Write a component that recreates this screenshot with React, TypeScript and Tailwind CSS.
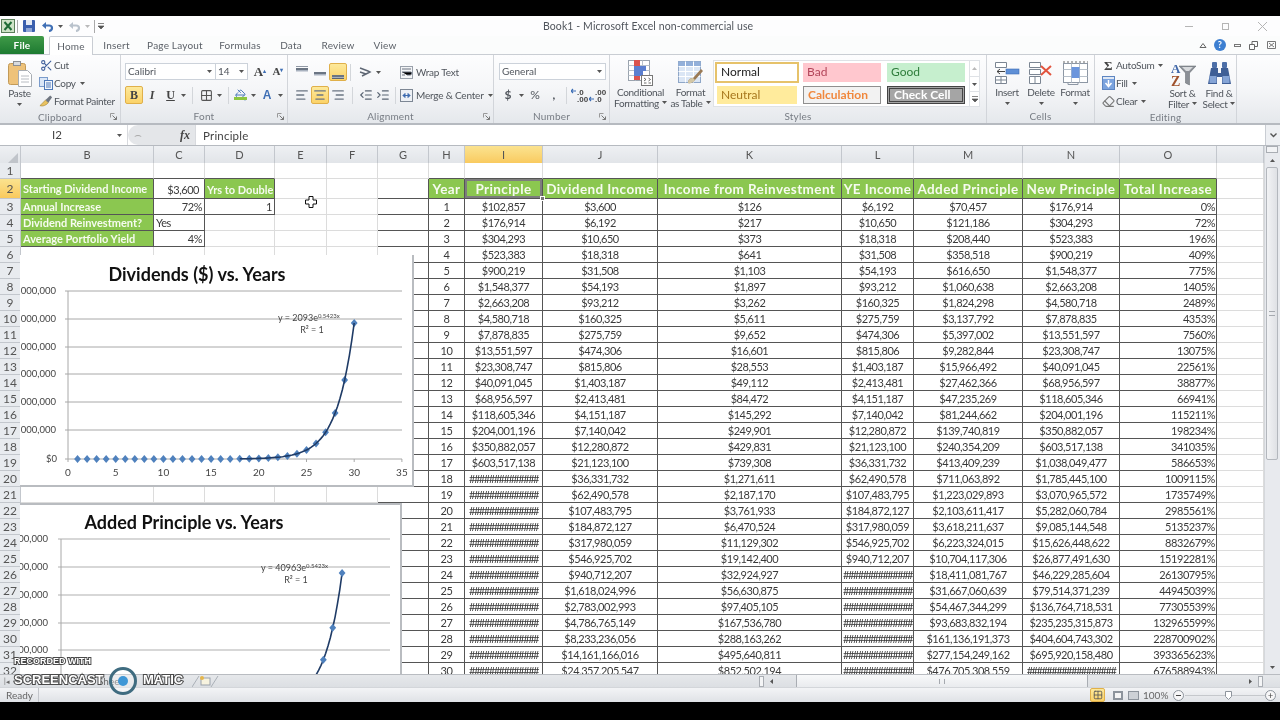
import { AlignCenter, AlignLeft, AlignRight, Eraser, Grid2x2, IndentDecrease, IndentIncrease, PaintBucket, Scissors } from 'lucide-react';
import clsx from 'clsx';
import type { ReactNode } from 'react';

const COLS = 'grid grid-cols-[21px_133px_51px_70px_52px_51px_51px_36px_78px_115px_184px_72px_109px_97px_97px_47px]';
const COL_NAMES = ['', 'B', 'C', 'D', 'E', 'F', 'G', 'H', 'I', 'J', 'K', 'L', 'M', 'N', 'O', ''];
const H14 = '##############';

const rows = [
  '1 $102,857 $3,600 $126 $6,192 $70,457 $176,914 0%',
  '2 $176,914 $6,192 $217 $10,650 $121,186 $304,293 72%',
  '3 $304,293 $10,650 $373 $18,318 $208,440 $523,383 196%',
  '4 $523,383 $18,318 $641 $31,508 $358,518 $900,219 409%',
  '5 $900,219 $31,508 $1,103 $54,193 $616,650 $1,548,377 775%',
  '6 $1,548,377 $54,193 $1,897 $93,212 $1,060,638 $2,663,208 1405%',
  '7 $2,663,208 $93,212 $3,262 $160,325 $1,824,298 $4,580,718 2489%',
  '8 $4,580,718 $160,325 $5,611 $275,759 $3,137,792 $7,878,835 4353%',
  '9 $7,878,835 $275,759 $9,652 $474,306 $5,397,002 $13,551,597 7560%',
  '10 $13,551,597 $474,306 $16,601 $815,806 $9,282,844 $23,308,747 13075%',
  '11 $23,308,747 $815,806 $28,553 $1,403,187 $15,966,492 $40,091,045 22561%',
  '12 $40,091,045 $1,403,187 $49,112 $2,413,481 $27,462,366 $68,956,597 38877%',
  '13 $68,956,597 $2,413,481 $84,472 $4,151,187 $47,235,269 $118,605,346 66941%',
  '14 $118,605,346 $4,151,187 $145,292 $7,140,042 $81,244,662 $204,001,196 115211%',
  '15 $204,001,196 $7,140,042 $249,901 $12,280,872 $139,740,819 $350,882,057 198234%',
  '16 $350,882,057 $12,280,872 $429,831 $21,123,100 $240,354,209 $603,517,138 341035%',
  '17 $603,517,138 $21,123,100 $739,308 $36,331,732 $413,409,239 $1,038,049,477 586653%',
  `18 ${H14} $36,331,732 $1,271,611 $62,490,578 $711,063,892 $1,785,445,100 1009115%`,
  `19 ${H14} $62,490,578 $2,187,170 $107,483,795 $1,223,029,893 $3,070,965,572 1735749%`,
  `20 ${H14} $107,483,795 $3,761,933 $184,872,127 $2,103,611,417 $5,282,060,784 2985561%`,
  `21 ${H14} $184,872,127 $6,470,524 $317,980,059 $3,618,211,637 $9,085,144,548 5135237%`,
  `22 ${H14} $317,980,059 $11,129,302 $546,925,702 $6,223,324,015 $15,626,448,622 8832679%`,
  `23 ${H14} $546,925,702 $19,142,400 $940,712,207 $10,704,117,306 $26,877,491,630 15192281%`,
  `24 ${H14} $940,712,207 $32,924,927 ${H14} $18,411,081,767 $46,229,285,604 26130795%`,
  `25 ${H14} $1,618,024,996 $56,630,875 ${H14} $31,667,060,639 $79,514,371,239 44945039%`,
  `26 ${H14} $2,783,002,993 $97,405,105 ${H14} $54,467,344,299 $136,764,718,531 77305539%`,
  `27 ${H14} $4,786,765,149 $167,536,780 ${H14} $93,683,832,194 $235,235,315,873 132965599%`,
  `28 ${H14} $8,233,236,056 $288,163,262 ${H14} $161,136,191,373 $404,604,743,302 228700902%`,
  `29 ${H14} $14,161,166,016 $495,640,811 ${H14} $277,154,249,162 $695,920,158,480 393365623%`,
  `30 ${H14} $24,357,205,547 $852,502,194 ${H14} $476,705,308,559 ################## 676588943%`,
].map((r) => r.split(' '));

const tableHeads = ['Year', 'Principle', 'Dividend Income', 'Income from Reinvestment', 'YE Income', 'Added Principle', 'New Principle', 'Total Increase'];
const sideTable: [string, string, boolean][] = [
  ['Annual Increase', '72%', true],
  ['Dividend Reinvestment?', 'Yes', false],
  ['Average Portfolio Yield', '4%', true],
];

function Caret({ className }: { className?: string }) {
  return (
    <svg width="5" height="3" viewBox="0 0 5 3" className={clsx('shrink-0', className)}>
      <path d="M0 0h5L2.5 3z" fill="#555" />
    </svg>
  );
}

function Slot({ className, children }: { className: string; children?: ReactNode }) {
  return <div className={clsx('flex shrink-0 items-center justify-center', className)}>{children}</div>;
}

function Sep({ className }: { className?: string }) {
  return <div className={clsx('h-[17px] w-px shrink-0 bg-[#d3d6da]', className)} />;
}

function Group({ className, label, launcher, children }: { className: string; label: string; launcher?: boolean; children: ReactNode }) {
  return (
    <div className={clsx('flex h-full shrink-0 flex-col border-r border-[#d2d5da]', className)}>
      <div className="h-[55px] overflow-visible">{children}</div>
      <div className="grid h-[14px] grid-cols-[1fr_auto_1fr] items-center text-[10px] leading-none tracking-[0.2px] text-[#777c84]">
        <span />
        <span>{label}</span>
        {launcher ? (
          <svg width="7" height="7" viewBox="0 0 7 7" className="mr-[3px] justify-self-end">
            <path d="M.5.5h4M.5.5v4" stroke="#999" fill="none" />
            <path d="M2.5 2.5l4 4M6.5 3.5v3h-3" stroke="#777" fill="none" />
          </svg>
        ) : (
          <span />
        )}
      </div>
    </div>
  );
}

function SmallBtn({ icon, label, caret }: { icon: ReactNode; label: string; caret?: boolean }) {
  return (
    <div className="flex h-[18px] items-center whitespace-nowrap text-[10px] tracking-[-0.3px] text-[#50555c]">
      <div className="flex w-[14px] shrink-0 justify-center">{icon}</div>
      <span className="ml-[1px]">{label}</span>
      {caret && <Caret className="ml-[4px]" />}
    </div>
  );
}

function BigBtn({ className, icon, lines, caret }: { className: string; icon: ReactNode; lines: string[]; caret?: boolean }) {
  return (
    <div className={clsx('flex shrink-0 flex-col items-center pt-[4px] text-[10px] leading-[10.5px] tracking-[-0.3px] text-[#50555c]', className)}>
      <div className="flex h-[28px] items-center justify-center">{icon}</div>
      <span className="whitespace-nowrap">{lines[0]}</span>
      {lines[1] ? (
        <span className="flex items-center whitespace-nowrap">
          {lines[1]}
          {caret && <Caret className="ml-[3px]" />}
        </span>
      ) : (
        <Caret className="mt-[4px]" />
      )}
    </div>
  );
}

function ExcelLogo() {
  return (
    <svg width="14" height="14" viewBox="0 0 14 14">
      <rect x=".5" y=".5" width="13" height="13" fill="#cfe3c8" stroke="#5a7f5a" />
      <path d="M3.5 3l7 8M10.5 3l-7 8" stroke="#1f6b36" strokeWidth="2" />
    </svg>
  );
}

function SaveIcon() {
  return (
    <svg width="12" height="12" viewBox="0 0 12 12">
      <rect width="12" height="12" rx="1" fill="#3b5fae" />
      <rect x="3" y="0" width="6" height="5" fill="#e6ebf5" />
      <rect x="3" y="8" width="6" height="4" fill="#8fa6d6" />
    </svg>
  );
}

function UndoIcon({ color }: { color: string }) {
  return (
    <svg width="12" height="11" viewBox="0 0 12 11">
      <path d="M3 4.5h4c4 0 4 5 0 5.5" fill="none" stroke={color} strokeWidth="2.2" />
      <path d="M0 4.5L4 1v7z" fill={color} />
    </svg>
  );
}

function PasteIcon() {
  return (
    <svg width="24" height="26" viewBox="0 0 24 26">
      <rect x=".5" y="2.5" width="17" height="21" rx="2" fill="#eec27a" stroke="#c29a58" />
      <rect x="5.5" y=".5" width="7" height="4" fill="#d8dbdf" stroke="#8b8f95" />
      <path d="M10.5 9.5h9l4 4v12h-13z" fill="#fff" stroke="#a8adb3" />
      <path d="M13 15h8M13 18h8M13 21h8" stroke="#b8bcc2" />
    </svg>
  );
}

function CopyIcon() {
  return (
    <svg width="14" height="13" viewBox="0 0 14 13">
      <rect x=".5" y=".5" width="8" height="9" fill="#dbe7f7" stroke="#7a9bcb" />
      <rect x="5.5" y="3.5" width="8" height="9" fill="#f2f6fc" stroke="#4f79b8" />
      <path d="M7 6h5M7 8h5M7 10h5" stroke="#4f79b8" />
    </svg>
  );
}

function PainterIcon() {
  return (
    <svg width="15" height="14" viewBox="0 0 15 14">
      <path d="M1 12l6-6 3 3c-3 3-6 4-9 3z" fill="#e9c25f" stroke="#a98a3b" strokeWidth=".7" />
      <path d="M7 6l3 3 4-6-2-2z" fill="#6f7681" />
    </svg>
  );
}

function VAlignIcon({ pos }: { pos: 't' | 'm' | 'b' }) {
  const y = pos === 't' ? 2 : pos === 'm' ? 6 : 9;
  return (
    <svg width="12" height="13" viewBox="0 0 12 13">
      <rect x="0" y={y} width="12" height="3" fill="#6b7583" />
      <rect x="0" y={y + 2} width="12" height="1.5" fill="#a9b2bf" />
      {pos === 'b' && <rect x="0" y="12" width="12" height="1" fill="#5d6571" />}
      {pos === 't' && <rect x="0" y="0" width="12" height="1" fill="#9098a4" />}
    </svg>
  );
}

function OrientIcon() {
  return (
    <svg width="15" height="13" viewBox="0 0 15 13">
      <path d="M1 2l8 3M1 6l6 2M3 10l6-3M9 5l2 1-2 1" fill="none" stroke="#5f6774" strokeWidth="1.4" />
    </svg>
  );
}

function WrapIcon() {
  return (
    <svg width="13" height="13" viewBox="0 0 13 13" className="shrink-0">
      <rect x=".5" y=".5" width="12" height="12" fill="#f4f5f7" stroke="#9aa1ab" />
      <path d="M2 3h9M2 6h9c1 0 1 3-1 3H7M2 9h3" stroke="#6a7280" />
    </svg>
  );
}

function MergeIcon() {
  return (
    <svg width="13" height="13" viewBox="0 0 13 13" className="shrink-0">
      <rect x=".5" y=".5" width="12" height="12" fill="#eef1f5" stroke="#7d8794" />
      <path d="M3 6.5h7M3 6.5l2-2v4zM10 6.5l-2-2v4z" fill="#3f6cb0" stroke="#3f6cb0" />
    </svg>
  );
}

function DecimalIcon({ top, bottom, flip }: { top: string; bottom: string; flip?: boolean }) {
  return (
    <svg width="17" height="15" viewBox="0 0 17 15" className="shrink-0 font-['Liberation_Sans',sans-serif]">
      <path d={flip ? 'M0 11h5M0 11l2-2M0 11l2 2' : 'M0 3h5M0 3l2-2M0 3l2 2'} stroke="#3b6db5" fill="none" strokeWidth="1.2" />
      <text x="6" y="6.5" fontSize="8" fontWeight="700" fill="#444">{top}</text>
      <text x="6" y="14" fontSize="8" fontWeight="700" fill="#444">{bottom}</text>
    </svg>
  );
}

function CondFormatIcon() {
  return (
    <svg width="25" height="26" viewBox="0 0 25 26">
      <rect x=".5" y=".5" width="21" height="20" fill="#fff" stroke="#9aa3ae" />
      <path d="M.5 5.5h21M.5 10.5h21M.5 15.5h21M7.5.5v20M14.5.5v20" stroke="#b9c2cc" />
      <rect x="6" y="0" width="6" height="6" fill="#d9534f" />
      <rect x="6" y="6" width="12" height="5" fill="#5b7fd0" />
      <rect x="6" y="11" width="9" height="5" fill="#5b7fd0" />
      <rect x="6" y="16" width="6" height="4" fill="#d9534f" />
      <rect x="13.5" y="15.5" width="11" height="10" fill="#fff" stroke="#777" />
      <path d="M16 18l2 1.5-2 1.5M16 23h2.5M20.5 18l2 1.5-2 1.5M20.5 23h2.5" stroke="#444" fill="none" strokeWidth=".8" />
    </svg>
  );
}

function TableIcon() {
  return (
    <svg width="25" height="24" viewBox="0 0 25 24">
      <rect x=".5" y=".5" width="22" height="21" fill="#dbe6f5" stroke="#8ea6c7" />
      <rect x=".5" y=".5" width="22" height="5" fill="#93b0da" />
      <path d="M.5 5.5h22M.5 10.5h22M.5 15.5h22M7.5.5v21M15.5.5v21" stroke="#fff" />
      <path d="M10 22c0-4 3-5 5-5l8-9 2 2-8 9c-2 2-4 4-7 3z" fill="#9a7a56" />
      <path d="M10 22c0-4 3-5 5-5l2 2c-2 2-4 4-7 3z" fill="#d3c7a6" />
    </svg>
  );
}

function InsertIcon() {
  return (
    <svg width="25" height="22" viewBox="0 0 25 22">
      <path d="M.5.5h11v5H.5zM.5 14.5h11v7H.5zM6 14.5v7M.5 18h11" fill="#fff" stroke="#7b8592" />
      <rect x="11" y="7" width="13" height="5" fill="#5f8fd6" stroke="#3d6db5" strokeWidth=".6" />
      <path d="M10 9.5H2M2 9.5l3-2.5M2 9.5l3 2.5" stroke="#444" fill="none" />
    </svg>
  );
}

function DeleteIcon() {
  return (
    <svg width="24" height="22" viewBox="0 0 24 22">
      <path d="M.5.5h11v5H.5zM.5 7.5h11v5H.5zM.5 14.5h11v7H.5zM6 14.5v7" fill="#fff" stroke="#7b8592" />
      <path d="M12 4l10 9M22 4l-10 9" stroke="#e2543e" strokeWidth="2" />
    </svg>
  );
}

function FormatIcon() {
  return (
    <svg width="25" height="24" viewBox="0 0 25 24">
      <rect x=".5" y="2.5" width="24" height="19" fill="#fff" stroke="#8d97a4" />
      <path d="M.5 8.5h24M.5 15.5h24M8.5 2.5v19M16.5 2.5v19" stroke="#b7c0ca" />
      <rect x="8.5" y="6" width="8" height="11" fill="#6b95dc" />
      <path d="M0 1h25" stroke="#666" strokeDasharray="2 2" />
      <path d="M5 22v1.5h10V22" stroke="#8d97a4" fill="none" />
    </svg>
  );
}

function FillIcon() {
  return (
    <svg width="13" height="14" viewBox="0 0 13 14">
      <rect x=".5" y=".5" width="12" height="13" fill="#dfe8f5" stroke="#5d85c1" />
      <rect x="1" y="3" width="11" height="10" fill="#7ba3de" />
      <path d="M6.5 4v5M3.5 7l3 3.5L9.5 7" stroke="#fff" strokeWidth="1.5" fill="none" />
    </svg>
  );
}

function SortIcon() {
  return (
    <svg width="26" height="25" viewBox="0 0 26 25" className="font-['Liberation_Serif',serif]">
      <text x="1" y="11" fontSize="13" fontWeight="700" fill="#3f66a8">A</text>
      <text x="1" y="24" fontSize="14" fontWeight="700" fill="#a0522d">Z</text>
      <path d="M9 4h17l-6.5 7v12l-4-2V11z" fill="#8b8f96" stroke="#5f646b" strokeWidth=".5" />
      <path d="M12 5h11l-4 4h-3z" fill="#d8dadd" />
    </svg>
  );
}

function BinocularsIcon() {
  return (
    <svg width="23" height="24" viewBox="0 0 23 24">
      <rect x="4" y="0" width="5" height="6" rx="1" fill="#4d6fa8" />
      <rect x="14" y="0" width="5" height="6" rx="1" fill="#4d6fa8" />
      <path d="M3 6h7v5h3V6h7l3 16h-9v-7h-5v7H0z" fill="#3f5f96" />
      <rect x="1.5" y="14" width="7" height="7" fill="#85a4d6" />
      <rect x="14.5" y="14" width="7" height="7" fill="#85a4d6" />
    </svg>
  );
}

function StyleCell({ className, children }: { className: string; children: string }) {
  return <div className={clsx('flex items-center pl-[4px] text-[12px] leading-none', className)}>{children}</div>;
}

function TitleBar() {
  return (
    <div className="relative flex h-[20px] items-center bg-[#fdfdfe] text-[#555]">
      <Slot className="ml-[1px] w-[14px]"><ExcelLogo /></Slot>
      <div className="ml-[2px] h-[13px] w-px bg-[#aaa]" />
      <Slot className="ml-[5px] w-[12px]"><SaveIcon /></Slot>
      <Slot className="ml-[7px] w-[12px]"><UndoIcon color="#3f6fb5" /></Slot>
      <Caret className="ml-[4px]" />
      <Slot className="ml-[6px] w-[12px]"><UndoIcon color="#b9c2cc" /></Slot>
      <Caret className="ml-[4px] opacity-40" />
      <div className="ml-[4px] h-[13px] w-px bg-[#aaa]" />
      <Slot className="ml-[2px] w-[8px]">
        <svg width="6" height="6" viewBox="0 0 6 6"><path d="M0 .5h6M0 3h6L3 6z" stroke="#555" strokeWidth=".7" fill="#555" /></svg>
      </Slot>
      <div className="ml-[438px] whitespace-nowrap pt-[1px] text-[10.5px] tracking-[0.1px] text-[#50555c]">Book1 - Microsoft Excel non-commercial use</div>
      <div className="ml-auto flex items-center pr-[13px]">
        <div className="h-px w-[8px] bg-[#b5b5b5]" />
        <div className="ml-[29px] h-[7px] w-[7px] border border-[#b5b5b5]" />
        <svg width="9" height="9" viewBox="0 0 9 9" className="ml-[29px]"><path d="M0 0l9 9M9 0L0 9" stroke="#b5b5b5" /></svg>
      </div>
    </div>
  );
}

function TabsRow() {
  const tabs = [
    ['Insert', 'w-[47px]'],
    ['Page Layout', 'w-[70px]'],
    ['Formulas', 'w-[60px]'],
    ['Data', 'w-[42px]'],
    ['Review', 'w-[52px]'],
    ['View', 'w-[42px]'],
  ];
  return (
    <div className="flex h-[19px] items-stretch border-b border-[#c9cdd3] bg-[#fbfcfc] text-[10px] tracking-[0.2px] text-[#5c6168]">
      <div className="flex w-[44px] items-center justify-center rounded-t-[2px] bg-gradient-to-b from-[#3f9a48] to-[#1c7a31] font-bold text-white">File</div>
      <div className="z-10 -mb-px ml-[5px] flex w-[44px] items-center justify-center rounded-t-[2px] border border-b-0 border-[#c9cdd3] bg-white">Home</div>
      {tabs.map(([t, w]) => (
        <div key={t} className={clsx('flex items-center justify-center', w)}>{t}</div>
      ))}
      <div className="ml-auto flex items-center pr-[4px]">
        <svg width="8" height="6" viewBox="0 0 8 6"><path d="M1 5.5l3-4 3 4z" fill="none" stroke="#666" /></svg>
        <div className="ml-[7px] flex h-[12px] w-[12px] items-center justify-center rounded-full bg-[#3d7fd1] text-[9px] font-bold text-white">?</div>
        <div className="ml-[8px] h-[3px] w-[7px] border border-[#777]" />
        <svg width="9" height="9" viewBox="0 0 9 9" className="ml-[8px]"><path d="M.5 3.5h5v5h-5zM3 3V.5h5.5v5H6" fill="none" stroke="#666" /></svg>
        <svg width="9" height="8" viewBox="0 0 9 8" className="ml-[9px]"><path d="M.5.5h8v7h-8zM2 2l5 4M7 2L2 6" fill="none" stroke="#777" /></svg>
      </div>
    </div>
  );
}

function Ribbon() {
  return (
    <div className="flex h-[70px] border-b-2 border-[#b6bac0] bg-gradient-to-b from-[#fdfdfe] via-[#f5f6f8] to-[#e5e8ec]">
      <Group className="w-[121px]" label="Clipboard" launcher>
        <div className="flex pt-[1px]">
          <BigBtn className="w-[39px]" icon={<PasteIcon />} lines={['Paste']} />
          <div className="flex flex-col">
            <SmallBtn icon={<Scissors size={13} className="text-[#40609c]" />} label="Cut" />
            <SmallBtn icon={<CopyIcon />} label="Copy" caret />
            <SmallBtn icon={<PainterIcon />} label="Format Painter" />
          </div>
        </div>
      </Group>
      <Group className="w-[167px]" label="Font" launcher>
        <div className="flex flex-col gap-[6px] pt-[8px] pl-[4px]">
          <div className="flex h-[17px] items-center text-[10px] text-[#50555c]">
            <div className="flex h-full w-[91px] items-center border border-[#ccd2da] bg-white pl-[2px] pr-[3px]">Calibri<Caret className="ml-auto" /></div>
            <div className="-ml-px flex h-full w-[33px] items-center border border-[#ccd2da] bg-white pl-[2px] pr-[3px]">14<Caret className="ml-auto" /></div>
            <span className="ml-[3px] w-[18px] text-center font-['Liberation_Serif',serif] text-[13px] font-bold text-[#444]">A<sup className="text-[6px] text-[#3f6fb5]">▴</sup></span>
            <span className="w-[18px] text-center font-['Liberation_Serif',serif] text-[11px] font-bold text-[#444]">A<sup className="text-[6px] text-[#3f6fb5]">▾</sup></span>
          </div>
          <div className="flex h-[18px] items-center font-['Liberation_Serif',serif] text-[12px] font-bold text-[#444]">
            <Slot className="h-full w-[18px] rounded-[2px] border border-[#e0b04a] bg-gradient-to-b from-[#fde99a] to-[#fbd268]">B</Slot>
            <Slot className="w-[18px] italic">I</Slot>
            <Slot className="w-[19px] underline">U</Slot>
            <Slot className="w-[7px]"><Caret /></Slot>
            <Slot className="w-[10px]"><Sep /></Slot>
            <Slot className="w-[18px]"><Grid2x2 size={13} className="text-[#555]" /></Slot>
            <Slot className="w-[9px]"><Caret /></Slot>
            <Slot className="w-[8px]"><Sep /></Slot>
            <Slot className="relative w-[18px]">
              <PaintBucket size={12} className="text-[#4a78b8]" />
              <span className="absolute bottom-[1px] left-[2px] h-[3px] w-[13px] bg-[#8cc63f]" />
            </Slot>
            <Slot className="w-[7px]"><Caret /></Slot>
            <Slot className="w-[20px] font-['Liberation_Sans',sans-serif] text-[#3f6fb5]">A</Slot>
            <Slot className="w-[6px]"><Caret /></Slot>
          </div>
        </div>
      </Group>
      <Group className="w-[206px]" label="Alignment" launcher>
        <div className="flex flex-col gap-[5px] pt-[8px] pl-[5px] text-[10px] tracking-[-0.2px] text-[#50555c]">
          <div className="flex h-[18px] items-center">
            <Slot className="w-[18px]"><VAlignIcon pos="t" /></Slot>
            <Slot className="w-[18px]"><VAlignIcon pos="m" /></Slot>
            <Slot className="h-full w-[18px] rounded-[2px] border border-[#e0b04a] bg-gradient-to-b from-[#fde99a] to-[#fbd268]"><VAlignIcon pos="b" /></Slot>
            <Slot className="w-[6px]"><Sep /></Slot>
            <Slot className="w-[26px]"><OrientIcon /></Slot>
            <Caret className="-ml-[3px] mr-[19px]" />
            <WrapIcon />
            <span className="ml-[3px] whitespace-nowrap">Wrap Text</span>
          </div>
          <div className="flex h-[18px] items-center">
            <Slot className="w-[18px]"><AlignLeft size={14} strokeWidth={2.4} className="text-[#6b7583]" /></Slot>
            <Slot className="h-full w-[18px] rounded-[2px] border border-[#e0b04a] bg-gradient-to-b from-[#fde99a] to-[#fbd268]"><AlignCenter size={14} strokeWidth={2.4} className="text-[#6b7583]" /></Slot>
            <Slot className="w-[18px]"><AlignRight size={14} strokeWidth={2.4} className="text-[#6b7583]" /></Slot>
            <Slot className="w-[11px]"><Sep /></Slot>
            <Slot className="w-[16px]"><IndentDecrease size={14} className="text-[#596472]" /></Slot>
            <Slot className="w-[17px]"><IndentIncrease size={14} className="text-[#596472]" /></Slot>
            <Slot className="w-[9px]"><Sep /></Slot>
            <MergeIcon />
            <span className="ml-[3px] whitespace-nowrap">Merge &amp; Center</span>
            <Caret className="ml-[4px]" />
          </div>
        </div>
      </Group>
      <Group className="w-[116px]" label="Number" launcher>
        <div className="flex flex-col gap-[6px] pt-[8px] pl-[5px] text-[10px] text-[#50555c]">
          <div className="flex h-[17px] w-[107px] items-center border border-[#ccd2da] bg-white pl-[2px] pr-[3px]">General<Caret className="ml-auto" /></div>
          <div className="flex h-[18px] items-center text-[12px]">
            <Slot className="w-[18px] font-bold">$</Slot>
            <Slot className="w-[8px]"><Caret /></Slot>
            <Slot className="w-[20px]">%</Slot>
            <Slot className="w-[18px] font-bold">,</Slot>
            <Slot className="w-[6px]"><Sep /></Slot>
            <Slot className="ml-[1px] w-[18px]"><DecimalIcon top=".0" bottom=".00" /></Slot>
            <Slot className="w-[18px]"><DecimalIcon top=".00" bottom=".0" flip /></Slot>
          </div>
        </div>
      </Group>
      <Group className="w-[377px]" label="Styles">
        <div className="flex">
          <BigBtn className="w-[61px]" icon={<CondFormatIcon />} lines={['Conditional', 'Formatting']} caret />
          <BigBtn className="w-[39px]" icon={<TableIcon />} lines={['Format', 'as Table']} caret />
          <div className="ml-[3px] mt-[5px] flex h-[47px] w-[267px] border border-[#dfe2e6] bg-white">
            <div className="grid flex-1 grid-cols-[85px_84px_84px] grid-rows-2 gap-y-[2px] p-[1px]">
              <StyleCell className="mr-[1px] border-2 border-[#e6c26a] text-[#222]">Normal</StyleCell>
              <StyleCell className="m-[1px] ml-[3px] mr-[3px] bg-[#ffc7ce] text-[#b3455a]">Bad</StyleCell>
              <StyleCell className="m-[1px] ml-[3px] mr-[3px] bg-[#c6efce] text-[#2f7d3c]">Good</StyleCell>
              <StyleCell className="my-[1px] ml-[2px] mr-[3px] bg-[#ffeb9c] text-[#a7771c]">Neutral</StyleCell>
              <StyleCell className="my-[1px] ml-[3px] mr-[3px] border border-[#8f8f8f] bg-[#f2f2f2] font-bold text-[#f0873c]">Calculation</StyleCell>
              <StyleCell className="my-[1px] ml-[3px] mr-[3px] border-[3px] border-double border-[#444] bg-[#a5a5a5] font-bold text-white">Check Cell</StyleCell>
            </div>
            <div className="flex w-[11px] flex-col border-l border-[#dfe2e6] text-[#555]">
              <Slot className="h-[15px] opacity-40"><Caret className="rotate-180" /></Slot>
              <Slot className="h-[16px] border-y border-[#dfe2e6]"><Caret /></Slot>
              <Slot className="h-[14px]">
                <svg width="6" height="6" viewBox="0 0 6 6"><path d="M0 .5h6M0 3h6L3 6z" stroke="#555" strokeWidth=".7" fill="#555" /></svg>
              </Slot>
            </div>
          </div>
        </div>
      </Group>
      <Group className="w-[108px]" label="Cells">
        <div className="flex pl-[3px]">
          <BigBtn className="w-[34px]" icon={<InsertIcon />} lines={['Insert']} />
          <BigBtn className="w-[34px]" icon={<DeleteIcon />} lines={['Delete']} />
          <BigBtn className="w-[34px]" icon={<FormatIcon />} lines={['Format']} />
        </div>
      </Group>
      <Group className="w-[142px]" label="Editing">
        <div className="flex pt-[1px] pl-[6px]">
          <div className="flex w-[66px] flex-col">
            <SmallBtn icon={<span className="font-['Liberation_Serif',serif] text-[13px] font-bold leading-none text-[#444]">Σ</span>} label="AutoSum" caret />
            <SmallBtn icon={<FillIcon />} label="Fill" caret />
            <SmallBtn icon={<Eraser size={13} className="text-[#777]" />} label="Clear" caret />
          </div>
          <BigBtn className="w-[33px]" icon={<SortIcon />} lines={['Sort &', 'Filter']} caret />
          <BigBtn className="ml-[3px] w-[34px]" icon={<BinocularsIcon />} lines={['Find &', 'Select']} caret />
        </div>
      </Group>
    </div>
  );
}

function FormulaBar() {
  return (
    <div className="flex h-[21px] items-center border-b border-[#b6bac0] bg-white text-[11.5px] text-[#444]">
      <div className="flex h-full w-[128px] items-center border-r border-[#d8dade] pr-[5px]">
        <span className="w-[114px] text-center">I2</span>
        <Caret className="ml-auto" />
      </div>
      <div className="flex h-full w-[67px] items-center rounded-l-full bg-[#e4e6e9] pl-[6px] pr-[3px]">
        <span className="text-[#aaa]">⌢</span>
        <span className="ml-auto pr-[2px] font-['Liberation_Serif',serif] text-[12px] font-bold italic text-[#444]">fx</span>
      </div>
      <div className="h-full flex-1 border-l border-[#d8dade] pl-[7px] pt-[2px] tracking-[0.2px]">Principle</div>
      <div className="flex h-full w-[15px] items-center justify-center border-l border-[#c9cdd3] bg-[#eef0f3]">
        <svg width="7" height="5" viewBox="0 0 7 5"><path d="M.5.5l3 3 3-3" fill="none" stroke="#555" strokeWidth="1.4" /></svg>
      </div>
    </div>
  );
}

function Cell({ className, children }: { className?: string; children?: ReactNode }) {
  return (
    <div className={clsx('flex items-center overflow-hidden whitespace-nowrap border-r border-b px-[2px] pt-[1px]', className)}>
      {children}
    </div>
  );
}

const LIGHT = 'border-[#dcdcdc]';
const DARK = 'border-[#555]';
const TOP_EDGE = 'border-r-[#dcdcdc] border-b-[#555]';
const GREEN = 'border-[#555] bg-[#8bc750] font-bold text-[#f6fbef]';
const RH = 'justify-center !px-0 border-[#c3c7cd] bg-[#e8ebef] text-[12px] tracking-normal text-[#555]';

function HeaderRow() {
  return (
    <div className={clsx(COLS, 'h-[17px] text-[11px] text-[#555]')}>
      {COL_NAMES.map((c, i) => (
        <div
          key={i}
          className={clsx(
            'flex items-center justify-center border-r border-b border-[#c3c7cd] pt-[1px]',
            c === 'I' ? 'bg-gradient-to-b from-[#fbe38f] to-[#f9c95c]' : 'bg-gradient-to-b from-[#eef0f3] to-[#e1e4e8]',
          )}
        >
          {i === 0 ? (
            <svg width="10" height="10" viewBox="0 0 10 10" className="ml-auto mr-[2px] mt-auto mb-[1px]"><path d="M10 0v10H0z" fill="#c0c4ca" /></svg>
          ) : (
            c
          )}
        </div>
      ))}
    </div>
  );
}

function Sheet() {
  return (
    <div className="relative h-[511px] overflow-hidden bg-white text-[11px] tracking-[-0.45px] text-[#3a3a3a]">
      {/* row 1 */}
      <div className={clsx(COLS, 'h-[16px]')}>
        <Cell className={RH}>1</Cell>
        <Cell className={TOP_EDGE} />
        <Cell className={TOP_EDGE} />
        <Cell className={TOP_EDGE} />
        <Cell className={LIGHT} />
        <Cell className={LIGHT} />
        <Cell className={LIGHT} />
        {Array.from({ length: 8 }).map((_, i) => (
          <Cell key={i} className={TOP_EDGE} />
        ))}
        <Cell className={LIGHT} />
      </div>
      {/* row 2, table headings */}
      <div className={clsx(COLS, 'h-[20px]')}>
        <Cell className="justify-center !px-0 border-[#c3c7cd] bg-gradient-to-b from-[#fbe38f] to-[#f9c95c] text-[12px] tracking-normal text-[#555]">2</Cell>
        <Cell className={clsx(GREEN, 'text-[11px] tracking-[0px]')}>Starting Dividend Income</Cell>
        <Cell className={clsx(DARK, 'justify-end pr-[5px] pt-[3px]')}>$3,600</Cell>
        <Cell className={clsx(GREEN, 'pt-[3px] text-[11px] tracking-[0px]')}>Yrs to Double</Cell>
        <Cell className={LIGHT} />
        <Cell className={LIGHT} />
        <Cell className={DARK} />
        {tableHeads.map((h, i) => (
          <Cell key={h} className={clsx(GREEN, 'relative justify-center !px-0 text-[13.5px] tracking-[0.4px]')}>
            {h}
            {i === 1 && <span className="absolute inset-0 border-2 border-[#7d7d7d]" />}
          </Cell>
        ))}
        <Cell className={LIGHT} />
      </div>
      {rows.map((r, i) => {
        const n = i + 3;
        const side = sideTable[i];
        return (
          <div key={n} className={clsx(COLS, 'h-[16px]')}>
            <Cell className={RH}>{n}</Cell>
            {side ? (
              <>
                <Cell className={clsx(GREEN, 'text-[11px] tracking-[0px]')}>{side[0]}</Cell>
                <Cell className={clsx(DARK, side[2] && 'justify-end')}>{side[1]}</Cell>
              </>
            ) : (
              <>
                <Cell className={LIGHT} />
                <Cell className={LIGHT} />
              </>
            )}
            {i === 0 ? <Cell className={clsx(DARK, 'justify-end')}>1</Cell> : <Cell className={LIGHT} />}
            <Cell className={LIGHT} />
            <Cell className={LIGHT} />
            <Cell className={DARK} />
            {r.map((v, j) => (
              <Cell
                key={j}
                className={clsx(DARK, j === 7 ? 'justify-end pr-[1px]' : 'justify-center', v.startsWith('#') && '!tracking-[-1.45px]')}
              >
                {v}
              </Cell>
            ))}
            <Cell className={LIGHT} />
          </div>
        );
      })}
      {/* fill handle of the selected cell */}
      <span className="absolute left-[540px] top-[33px] h-[5px] w-[5px] border border-white bg-[#777]" />
      <DividendChart />
      <PrincipleChart />
    </div>
  );
}

function curve(x0: number, unit: number, base: number, top: number, from: number) {
  const pts: string[] = [];
  for (let x = from; x <= 30; x += 0.25) {
    pts.push(`${(x0 + x * unit).toFixed(1)},${(base - top * Math.exp(0.5423 * (x - 30))).toFixed(1)}`);
  }
  return pts.join(' ');
}

function Diamond({ x, y }: { x: number; y: number }) {
  return <path d={`M${x} ${y - 4}l3.4 4-3.4 4-3.4-4z`} fill="#4f81bd" />;
}

function DividendChart() {
  const grid = [36, 64, 92, 119, 147, 175];
  const x0 = 48;
  const unit = 9.54;
  const years = Array.from({ length: 30 }, (_, i) => i + 1);
  return (
    <div className="absolute left-[20px] top-[92px] h-[232px] w-[394px] border-r-2 border-b-2 border-[#b9bcc0] bg-white tracking-normal">
      <svg width="392" height="230" viewBox="0 0 392 230">
        <text x="177" y="26" textAnchor="middle" fontSize="18" fontWeight="700" fill="#111">Dividends ($) vs. Years</text>
        {grid.map((y) => (
          <g key={y}>
            <path d={`M${x0 - 3} ${y}H382`} stroke="#a8a8a8" />
            <text x="36" y={y + 3} textAnchor="end" fontSize="9.5" fill="#444">000,000</text>
          </g>
        ))}
        <path d={`M${x0} 36V204M${x0 - 3} 204H382`} stroke="#a8a8a8" />
        <text x="37" y="207" textAnchor="end" fontSize="9.5" fill="#444">$0</text>
        {[0, 5, 10, 15, 20, 25, 30, 35].map((t) => (
          <g key={t}>
            <path d={`M${x0 + t * unit} 204v3`} stroke="#a8a8a8" />
            <text x={x0 + t * unit} y="221" textAnchor="middle" fontSize="10" fill="#444">{t}</text>
          </g>
        ))}
        {years.map((y) => (
          <Diamond key={y} x={x0 + y * unit} y={204 - 136 * Math.exp(0.5423 * (y - 30))} />
        ))}
        <polyline points={curve(x0, unit, 204, 136, 18)} fill="none" stroke="#1f3b66" strokeWidth="1.6" />
        <text x="258" y="66" fontSize="9" fill="#444">y = 2093e<tspan dy="-3" fontSize="6">0.5423x</tspan></text>
        <text x="292" y="78" textAnchor="middle" fontSize="9" fill="#444">R² = 1</text>
      </svg>
    </div>
  );
}

function PrincipleChart() {
  const grid = [36, 64, 92, 120, 147];
  const x0 = 41;
  const unit = 9.37;
  return (
    <div className="absolute left-[20px] top-[340px] h-[230px] w-[382px] border-t-2 border-r-2 border-[#b9bcc0] bg-white tracking-normal">
      <svg width="380" height="228" viewBox="0 0 380 228">
        <text x="164" y="24" textAnchor="middle" fontSize="18" fontWeight="700" fill="#111">Added Principle vs. Years</text>
        {grid.map((y) => (
          <g key={y}>
            <path d={`M${x0 - 3} ${y - 2}H370`} stroke="#b0b0b0" strokeWidth="1.2" />
            <text x="28" y={y + 1} textAnchor="end" fontSize="9.5" fill="#444">00,000</text>
          </g>
        ))}
        <path d={`M${x0} 34V200`} stroke="#a8a8a8" />
        <polyline points={curve(x0, unit, 199, 131, 24)} fill="none" stroke="#1f3b66" strokeWidth="1.6" />
        {[28, 29, 30].map((y) => (
          <Diamond key={y} x={x0 + y * unit} y={199 - 131 * Math.exp(0.5423 * (y - 30))} />
        ))}
        <text x="241" y="66" fontSize="9" fill="#444">y = 40963e<tspan dy="-3" fontSize="6">0.5423x</tspan></text>
        <text x="276" y="78" textAnchor="middle" fontSize="9" fill="#444">R² = 1</text>
      </svg>
    </div>
  );
}

function VScroll() {
  return (
    <div className="flex w-[16px] flex-col border-l border-[#d5d8dc] bg-[#e8eaee] pl-[1px] pr-[2px]">
      <div className="h-[7px] border border-[#a9adb3] bg-[#f2f3f5]" />
      <Slot className="h-[14px]"><Caret className="rotate-180" /></Slot>
      <div className="flex h-[293px] items-center justify-center rounded-[2px] border border-[#b3b7bd] bg-gradient-to-r from-[#f2f3f5] to-[#dfe1e5]">
        <div className="h-[5px] w-[6px] border-y border-[#a5a9af]" />
      </div>
      <div className="flex-1" />
      <Slot className="h-[14px]"><Caret /></Slot>
    </div>
  );
}

function BottomBars() {
  return (
    <>
      <div className="flex h-[13px] items-center border-t border-[#b9bcc1] bg-gradient-to-b from-[#e6e8eb] to-[#dcdfe3] text-[10px] text-[#666]">
        <span className="w-[14px] shrink-0 text-center text-[7px] leading-none">|◂</span>
        <span className="ml-[84px] w-[24px] shrink-0">Sheet</span>
        <svg width="34" height="13" viewBox="0 0 34 13" className="ml-[70px] shrink-0">
          <path d="M0 12L7 1M26 1l-7 11" stroke="#aab0b7" fill="none" />
          <rect x="9" y="3" width="9" height="7" fill="#f7f3df" stroke="#9aa1ab" />
          <circle cx="10" cy="3" r="2" fill="#e6b64b" />
        </svg>
        <div className="ml-[533px] h-[11px] w-[5px] shrink-0 border border-[#a9adb3] bg-[#f4f5f6]" />
        <Caret className="ml-[5px] rotate-90" />
        <div className="ml-[22px] flex h-full w-[292px] shrink-0 items-center justify-center border-x border-[#a9adb3] bg-gradient-to-b from-[#f8f9fa] to-[#e9ebee]">
          <div className="h-[5px] w-[6px] border-x border-[#a5a9af]" />
        </div>
        <Caret className="ml-[160px] -rotate-90" />
        <div className="ml-[5px] h-[11px] w-[5px] shrink-0 border border-[#a9adb3] bg-[#f4f5f6]" />
      </div>
      <div className="flex h-[15px] items-center border-t border-[#d3d6da] bg-gradient-to-b from-[#f3f4f6] to-[#dfe2e6] text-[10px] text-[#666]">
        <span className="flex h-full w-[39px] shrink-0 items-center border-r border-[#c3c6cb] pl-[6px]">Ready</span>
        <div className="ml-[1051px] flex h-[14px] w-[15px] shrink-0 items-center justify-center rounded-[2px] border border-[#e0b04a] bg-gradient-to-b from-[#fde99a] to-[#fbd268]">
          <Grid2x2 size={10} className="text-[#555]" />
        </div>
        <div className="ml-[8px] h-[9px] w-[10px] shrink-0 border-2 border-[#8d949c] bg-[#f5f5f5]" />
        <div className="ml-[5px] h-[9px] w-[11px] shrink-0 border border-[#8d949c] bg-[#cdd1d6]" />
        <span className="ml-[4px] w-[22px] shrink-0 text-center">100%</span>
        <div className="ml-[8px] flex h-[11px] w-[11px] shrink-0 items-center justify-center rounded-full border border-[#8d949c] bg-[#f7f7f8] text-[#444]"><span className="h-px w-[5px] bg-[#444]" /></div>
        <div className="relative ml-[1px] flex h-[8px] w-[80px] shrink-0 items-center">
          <div className="h-px w-full bg-[#c5c8cc]" />
          <svg width="7" height="9" viewBox="0 0 7 9" className="absolute left-[40px] top-0"><path d="M.5.5h6v5l-3 3-3-3z" fill="#fff" stroke="#8d949c" /></svg>
        </div>
        <div className="flex h-[11px] w-[11px] shrink-0 items-center justify-center rounded-full border border-[#8d949c] bg-[#f7f7f8] text-[9px] leading-none text-[#444]">+</div>
      </div>
    </>
  );
}

const OUTLINE = "font-['Liberation_Sans',sans-serif] font-bold text-white [-webkit-text-stroke:2px_#4a4a4a] [paint-order:stroke_fill]";

export default function App() {
  return (
    <div className="relative h-[720px] w-[1280px] overflow-hidden bg-black font-['Lato',sans-serif] blur-[0.5px]">
      <div className="h-[16px]" />
      <TitleBar />
      <TabsRow />
      <Ribbon />
      <FormulaBar />
      <div className="flex">
        <div className="w-[1264px]">
          <HeaderRow />
          <Sheet />
        </div>
        <VScroll />
      </div>
      <BottomBars />

      {/* mouse cursor */}
      <svg width="12" height="12" viewBox="0 0 12 12" className="absolute left-[305px] top-[196px]">
        <path d="M4 .5h4v3.5h3.5v4H8v3.5H4V8H.5V4H4z" fill="#fff" stroke="#111" />
      </svg>

      {/* recorder watermark */}
      <span className={clsx(OUTLINE, 'absolute left-[14px] top-[657px] whitespace-nowrap text-[9px] leading-none')}>RECORDED WITH</span>
      <span className={clsx(OUTLINE, 'absolute left-[14px] top-[673px] whitespace-nowrap text-[13px] leading-none')}>SCREENCAST</span>
      <span className={clsx(OUTLINE, 'absolute left-[143px] top-[673px] whitespace-nowrap text-[13px] leading-none')}>MATIC</span>
      <div className="absolute left-[109px] top-[667px] flex h-[28px] w-[28px] items-center justify-center rounded-full border-[3px] border-[#3f6c80] bg-white/30">
        <span className="h-[10px] w-[10px] rounded-full bg-[#3f97d6]" />
      </div>
    </div>
  );
}
